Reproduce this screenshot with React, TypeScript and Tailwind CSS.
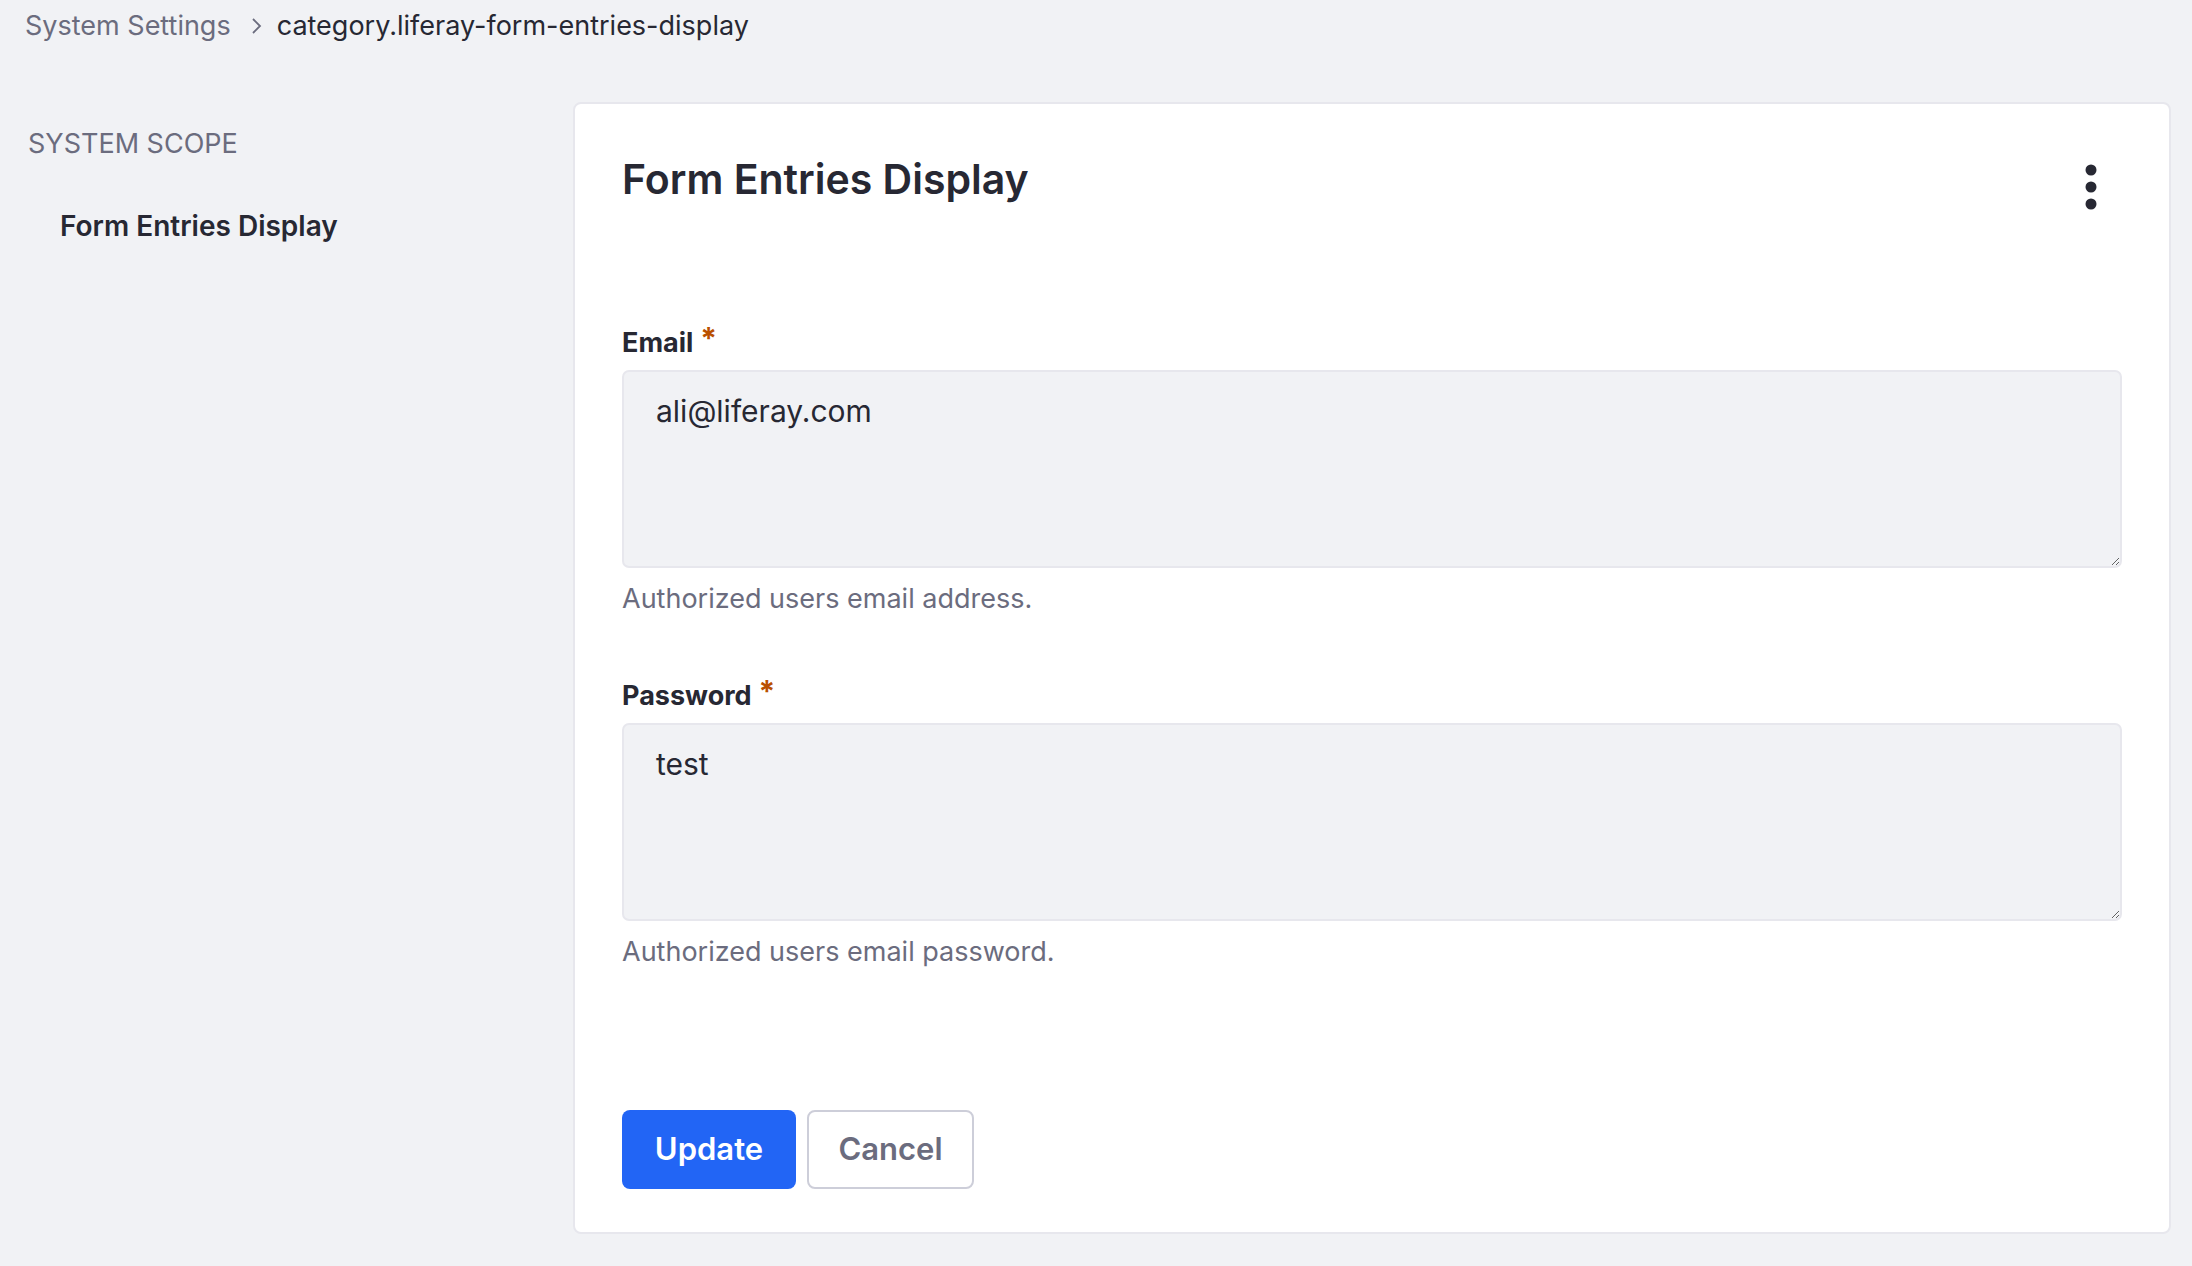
import React from "react";

const font = { fontFamily: "Inter, 'Noto Sans', sans-serif" };

function Kebab() {
  return (
    <svg width="14" height="46" viewBox="0 0 14 46" className="text-[#272833]">
      <circle cx="7" cy="6" r="5.5" fill="currentColor" />
      <circle cx="7" cy="23" r="5.5" fill="currentColor" />
      <circle cx="7" cy="40" r="5.5" fill="currentColor" />
    </svg>
  );
}

function Field({
  label,
  value,
  help,
}: {
  label: string;
  value: string;
  help: string;
}) {
  return (
    <div className="flex flex-col">
      <label className="mt-[2px] flex items-start text-[27px] font-bold leading-[36px] text-[#272833]">
        {label}
        <span className="ml-[7px] -mt-[2px] text-[30px] font-bold leading-[30px] text-[#b95000]">*</span>
      </label>
      <textarea
        readOnly
        defaultValue={value}
        className="mt-[9px] h-[198px] w-full rounded-[7px] border-2 border-[#e7e7ed] bg-[#f1f2f5] px-[32px] pt-[19px] pb-[14px] text-[30px] leading-[40px] text-[#272833] outline-none"
        style={font}
      />
      <p className="mt-[13px] text-[27px] leading-[36px] text-[#6b6c7e]">{help}</p>
    </div>
  );
}

export default function App() {
  return (
    <div className="min-h-[1266px] w-full bg-[#f1f2f5] text-[#272833]" style={font}>
      <nav className="flex h-[52px] items-center pl-[25px] text-[27px]">
        <span className="text-[#6b6c7e]">System Settings</span>
        <svg width="12" height="18" viewBox="0 0 12 18" className="ml-[19px] mr-[15px] text-[#6b6c7e]">
          <path d="M3 2l7 7-7 7" fill="none" stroke="currentColor" strokeWidth="1.8" />
        </svg>
        <span>category.liferay-form-entries-display</span>
      </nav>

      <div className="flex pt-[50px] pb-[32px] pr-[21px]">
        <aside className="w-[573px] shrink-0 pl-[28px]">
          <div className="pt-[24px] text-[27px] uppercase leading-[36px] text-[#6b6c7e]">System Scope</div>
          <div className="mt-[46px] pl-[32px] text-[28px] font-semibold leading-[36px]">Form Entries Display</div>
        </aside>

        <main className="flex-1 rounded-[8px] border-2 border-[#e7e7ed] bg-white px-[47px] pt-[51px] pb-[43px]">
          <div className="flex items-start justify-between">
            <h1 className="text-[41px] font-semibold leading-[48px]">Form Entries Display</h1>
            <div className="mr-[24px] mt-[9px]">
              <Kebab />
            </div>
          </div>

          <div className="mt-[113px] flex flex-col gap-[59px]">
            <Field label="Email" value="ali@liferay.com" help="Authorized users email address." />
            <Field label="Password" value="test" help="Authorized users email password." />
          </div>

          <div className="mt-[140px] flex gap-[11px]">
            <button className="h-[79px] w-[174px] rounded-[8px] bg-[#2265f5] text-[31px] font-semibold text-white">
              Update
            </button>
            <button className="h-[79px] w-[167px] rounded-[8px] border-2 border-[#cdced9] bg-white text-[31px] font-semibold text-[#6b6c7e]">
              Cancel
            </button>
          </div>
        </main>
      </div>
    </div>
  );
}
